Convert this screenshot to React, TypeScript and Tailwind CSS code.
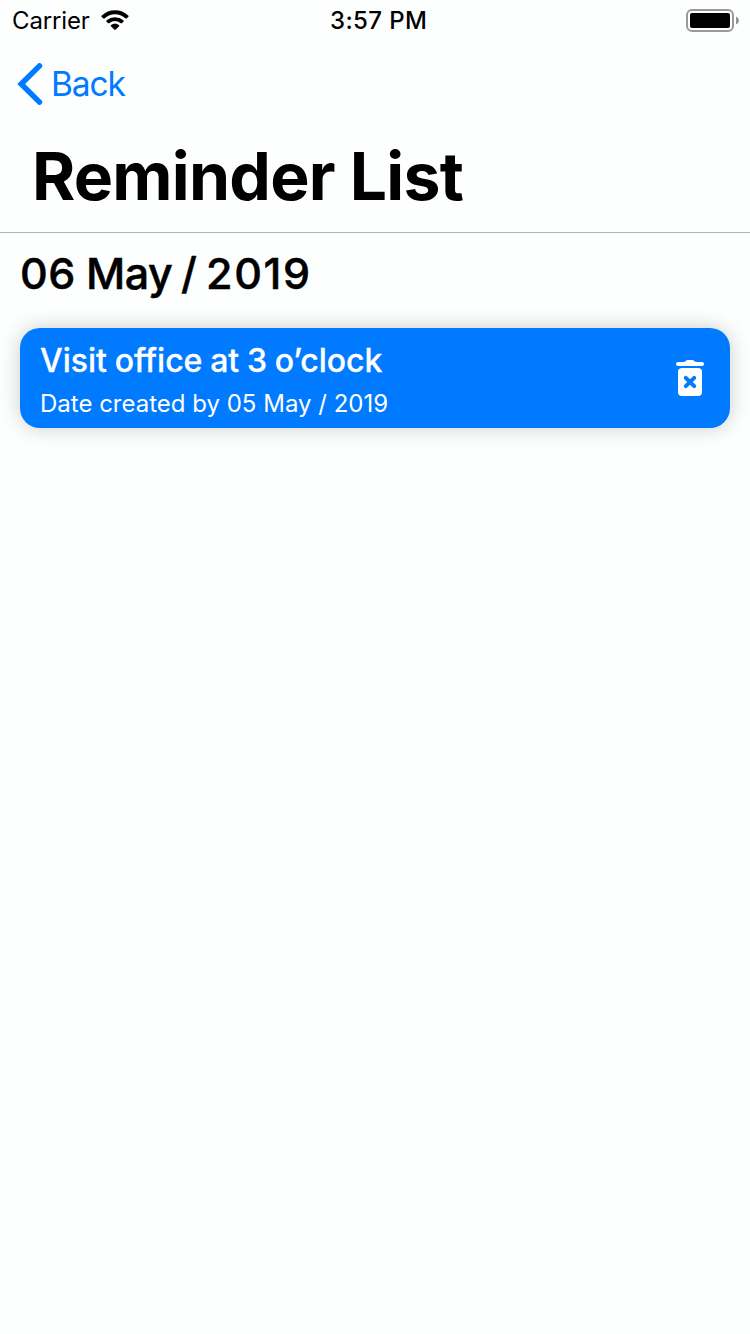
const font = "font-['Inter',sans-serif]";

function StatusBar() {
  return (
    <header className="flex h-10 items-center justify-between pl-3 pr-[10px] text-black">
      <div className="flex w-[318px] items-center">
        <span className="w-[89px] pt-[2px] text-[24px] leading-none tracking-[-0.15px]">Carrier</span>
        <svg width="28" height="20" viewBox="0 0 28 20">
          <path d="M.8 5.5Q0 6.2.8 7L2.1 8.2Q3 8.9 3.8 8.2A15.5 15.5 0 0 1 24.2 8.2Q25 8.9 25.9 8.2L27.2 7Q28 6.2 27.2 5.5A19.5 19.5 0 0 0 .8 5.5Z" />
          <path d="M5.6 10.3Q4.8 11 5.6 11.8L6.9 13Q7.7 13.6 8.6 12.9A8.7 8.7 0 0 1 19.4 12.9Q20.3 13.6 21.1 13L22.4 11.8Q23.2 11 22.4 10.3A13 13 0 0 0 5.6 10.3Z" />
          <path d="M10.1 15.1a6 6 0 0 1 7.8 0q.7.7 0 1.4l-3.1 3.1q-.8.7-1.6 0l-3.1-3.1q-.7-.7 0-1.4z" />
        </svg>
      </div>
      <span className="flex-1 pt-[2px] text-[24px] font-medium leading-none tracking-[0.4px]">3:57 PM</span>
      <svg width="54" height="23" viewBox="0 0 54 23">
        <rect x="1" y="1" width="46" height="21" rx="5" fill="none" stroke="#999999" strokeWidth="2" />
        <rect x="4" y="4" width="40" height="15" rx="2" />
        <path d="M50 7.5q3 1.3 3 4t-3 4z" fill="#929292" />
      </svg>
    </header>
  );
}

export default function App() {
  return (
    <main className={`h-[1334px] w-[750px] overflow-hidden bg-[#fdfefe] text-black ${font}`}>
      <StatusBar />
      <nav className="flex h-[88px] items-center gap-[8px] pl-[17px] text-[#007aff]">
        <svg width="26" height="42" viewBox="0 0 26 42" fill="none" stroke="currentColor" strokeWidth="5.5" strokeLinecap="round" strokeLinejoin="miter">
          <path d="M22.5 2.9L4.2 21L22.5 39.1" />
        </svg>
        <span className="pt-px text-[33.5px] leading-none tracking-[-1.1px]">Back</span>
      </nav>
      <h1 className="h-[105px] border-b border-[#b2b2b2] pl-8 pt-[8px] text-[66px] font-bold leading-[80px] tracking-[-0.75px]">Reminder List</h1>
      <section className="px-5">
        <h2 className="pt-[14px] text-[43px] font-medium leading-[52px] tracking-[0.6px] [-webkit-text-stroke:0.5px_black] [word-spacing:-2px]">
          06 <span className="tracking-[-0.6px]">May / </span>
          <span className="pl-px tracking-[1.6px]">2019</span>
        </h2>
        <article className="mt-[29px] flex h-[100px] items-center justify-between rounded-[20px] bg-[#007aff] pl-5 pr-[26px] text-white shadow-[0_0_20px_rgba(0,0,0,0.2)]">
          <div className="pt-[7px]">
            <h3 className="text-[32px] font-medium leading-[44px] [-webkit-text-stroke:0.3px_white] [word-spacing:-0.8px]">Visit office at 3 o’clock</h3>
            <p className="text-[24px] leading-[42px]">Date created by 05 May / 2019</p>
          </div>
          <svg width="28" height="36" viewBox="0 0 28 36" fill="currentColor">
            <path d="M2 2h5q2 0 3-1.3Q10.5 0 12 0h4q1.5 0 2 .7Q19 2 21 2h5a2 2 0 0 1 0 4H2a2 2 0 0 1 0-4z" />
            <path d="M6 8h16q4 0 4 4v20q0 4-4 4H6q-4 0-4-4V12q0-4 4-4z" />
            <path d="M9.8 17.8l8.4 8.4M18.2 17.8l-8.4 8.4" stroke="#007aff" strokeWidth="4" strokeLinecap="round" />
          </svg>
        </article>
      </section>
    </main>
  );
}
